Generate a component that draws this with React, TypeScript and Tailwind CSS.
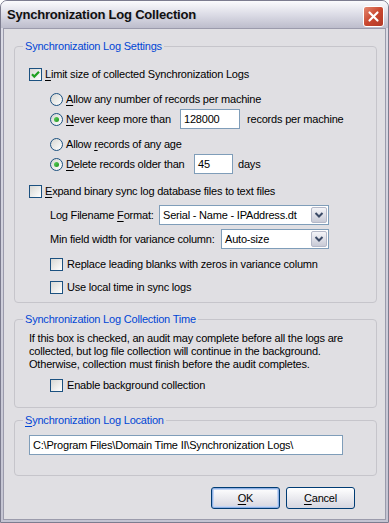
import React from 'react';

const font = { fontFamily: '"Liberation Sans", Arial, sans-serif' };

function CheckBox({ checked }: { checked?: boolean }) {
  return (
    <span className="w-[13px] h-[13px] shrink-0 border border-[#1c5180] bg-gradient-to-br from-[#d8d8d4] to-[#ffffff] flex items-center justify-center">
      {checked && (
        <svg width="11" height="11" viewBox="0 0 11 11">
          <path d="M2 5.2 L4.3 7.6 L9 2.8" fill="none" stroke="#21a121" strokeWidth="2.2" />
        </svg>
      )}
    </span>
  );
}

function Radio({ checked }: { checked?: boolean }) {
  return (
    <span className="w-[13px] h-[13px] shrink-0 rounded-full border border-[#1c5180] bg-gradient-to-br from-[#d6d6d2] to-[#ffffff] flex items-center justify-center">
      {checked && <span className="w-[5px] h-[5px] rounded-full bg-gradient-to-br from-[#5ed35e] to-[#1a931a]" />}
    </span>
  );
}

function U({ children }: { children: React.ReactNode }) {
  return <span className="underline underline-offset-[2px]">{children}</span>;
}

function TextBox({ value, className }: { value: string; className: string }) {
  return (
    <div className={`h-[20px] border border-[#7f9db9] bg-white flex items-center px-[3px] ${className}`}>{value}</div>
  );
}

function Combo({ value, className }: { value: string; className: string }) {
  return (
    <div className={`h-[20px] border border-[#7f9db9] bg-white flex items-center justify-between pl-[3px] pr-[1px] ${className}`}>
      <span>{value}</span>
      <span className="w-[16px] h-[16px] rounded-[2px] border border-[#b4b8c8] bg-gradient-to-b from-[#f4f4f8] to-[#c8cad6] flex items-center justify-center">
        <svg width="10" height="8" viewBox="0 0 10 8">
          <path d="M1.5 2 L5 5.5 L8.5 2" fill="none" stroke="#3b4a66" strokeWidth="2" />
        </svg>
      </span>
    </div>
  );
}

function GroupLabel({ children }: { children: React.ReactNode }) {
  return (
    <div className="-mt-[7px] ml-[8px] px-[2px] w-fit h-[13px] leading-[13px] bg-[#e0dfe3] text-[#0046d5]">{children}</div>
  );
}

export default function App() {
  return (
    <div
      style={font}
      className="w-[389px] h-[523px] flex flex-col rounded-t-[7px] border border-[#7c7c8f] bg-gradient-to-b from-[#dcdce6] to-[#c4c4d2] overflow-hidden text-[11px] tracking-[-0.2px] text-black"
    >
      <div className="h-[27px] shrink-0 flex items-center justify-between pl-[6px] pr-[4px] bg-gradient-to-b from-[#fbfbfd] via-[#dcdce6] to-[#bdbdcc]">
        <span className="text-[13px] font-bold tracking-[-0.2px] text-[#101010] [text-shadow:1px_1px_0_#c8c8d4]">
          Synchronization Log Collection
        </span>
        <span className="w-[21px] h-[21px] mt-[3px] rounded-[3px] border border-white bg-gradient-to-br from-[#e4876f] via-[#c9462e] to-[#b23a28] flex items-center justify-center">
          <svg width="13" height="13" viewBox="0 0 13 13">
            <path d="M2.5 2.5 L10.5 10.5 M10.5 2.5 L2.5 10.5" stroke="#ffffff" strokeWidth="2.2" strokeLinecap="round" />
          </svg>
        </span>
      </div>

      <div className="flex-1 mx-[2px] mb-[2px] border border-[#9b9bac] bg-[#e0dfe3] flex flex-col">
        {/* Settings */}
        <div className="mt-[17px] ml-[10px] w-[363px] border border-[#c6c5cb] rounded-[4px] pb-[5px]">
          <GroupLabel>Synchronization Log Settings</GroupLabel>
          <div className="mt-[11px] h-[20px] flex items-center pl-[14px] gap-[3px]">
            <CheckBox checked />
            <span><U>L</U>imit size of collected Synchronization Logs</span>
          </div>
          <div className="mt-[5px] h-[20px] flex items-center pl-[35px] gap-[3px]">
            <Radio />
            <span><U>A</U>llow any number of records per machine</span>
          </div>
          <div className="h-[20px] flex items-center pl-[35px]">
            <Radio checked />
            <span className="ml-[3px] w-[114px]"><U>N</U>ever keep more than</span>
            <TextBox value="128000" className="w-[60px]" />
            <span className="ml-[7px]">records per machine</span>
          </div>
          <div className="mt-[5px] h-[20px] flex items-center pl-[35px] gap-[3px]">
            <Radio />
            <span>Allow <U>r</U>ecords of any age</span>
          </div>
          <div className="h-[20px] flex items-center pl-[35px]">
            <Radio checked />
            <span className="ml-[3px] w-[128px]"><U>D</U>elete records older than</span>
            <TextBox value="45" className="w-[39px]" />
            <span className="ml-[5px]">days</span>
          </div>
          <div className="mt-[7px] h-[20px] flex items-center pl-[14px] gap-[3px]">
            <CheckBox />
            <span><U>E</U>xpand binary sync log database files to text files</span>
          </div>
          <div className="mt-[4px] h-[20px] flex items-center pl-[35px]">
            <span className="w-[109px]">Log Filename <U>F</U>ormat:</span>
            <Combo value="Serial - Name - IPAddress.dt" className="w-[170px]" />
          </div>
          <div className="mt-[4px] h-[20px] flex items-center pl-[35px]">
            <span className="w-[171px]">Min field width for variance column:</span>
            <Combo value="Auto-size" className="w-[108px]" />
          </div>
          <div className="mt-[5px] h-[20px] flex items-center pl-[35px] gap-[4px]">
            <CheckBox />
            <span>Replace leading blanks with zeros in variance column</span>
          </div>
          <div className="mt-[3px] h-[20px] flex items-center pl-[35px] gap-[4px]">
            <CheckBox />
            <span>Use local time in sync logs</span>
          </div>
        </div>

        {/* Collection time */}
        <div className="mt-[16px] ml-[10px] w-[363px] border border-[#c6c5cb] rounded-[4px] pb-[12px]">
          <GroupLabel>Synchronization Log Collection Time</GroupLabel>
          <p className="mt-[6px] pl-[14px] leading-[13px]">
            If this box is checked, an audit may complete before all the logs are
            <br />
            collected, but log file collection will continue in the background.
            <br />
            Otherwise, collection must finish before the audit completes.
          </p>
          <div className="mt-[4px] h-[20px] flex items-center pl-[35px] gap-[4px]">
            <CheckBox />
            <span>Enable background collection</span>
          </div>
        </div>

        {/* Location */}
        <div className="mt-[12px] ml-[10px] w-[363px] border border-[#c6c5cb] rounded-[4px] pb-[20px]">
          <GroupLabel><U>S</U>ynchronization Log Location</GroupLabel>
          <div className="mt-[8px] pl-[14px]">
            <TextBox value="C:\Program Files\Domain Time II\Synchronization Logs\" className="w-[314px]" />
          </div>
        </div>

        <div className="mt-[11px] flex justify-end gap-[6px] pr-[30px]">
          <button className="w-[69px] h-[22px] rounded-[3px] border border-[#003c74] bg-gradient-to-b from-[#ffffff] to-[#d6d6e0] shadow-[inset_0_0_0_1px_#8fb0e4,inset_0_0_0_2px_#c4d6f4] flex items-center justify-center">
            <U>O</U>K
          </button>
          <button className="w-[69px] h-[22px] rounded-[3px] border border-[#003c74] bg-gradient-to-b from-[#ffffff] to-[#d6d6e0] flex items-center justify-center">
            <U>C</U>ancel
          </button>
        </div>
      </div>
    </div>
  );
}
